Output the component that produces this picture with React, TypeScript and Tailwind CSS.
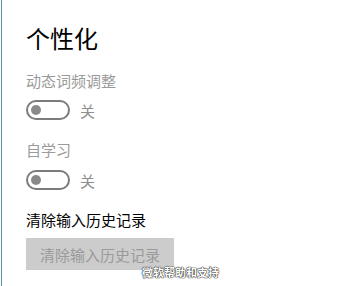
const font = { fontFamily: '"Noto Sans CJK SC", "Noto Sans", sans-serif' };

const Toggle = () => (
  <div className="flex items-center h-[20px]">
    <div className="w-[44px] h-[20px] rounded-full border-2 border-[#7c7c7c] flex items-center">
      <div className="w-[10px] h-[10px] rounded-full bg-[#8a8a8a] ml-[3px]" />
    </div>
    <span className="ml-[10px] text-[15px] leading-[15px] text-[#8e8e8e]">关</span>
  </div>
);

const App = () => {
  return (
    <div className="relative w-[356px] h-[286px] bg-white overflow-hidden pl-px" style={font}>
      <div className="h-full border-l border-[#5b99a0] pl-[24px] flex flex-col items-start">
        <h1 className="mt-[26px] text-[24px] leading-[24px] text-black font-normal">个性化</h1>
        <p className="mt-[23px] text-[15px] leading-[15px] text-[#9a9a9a]">动态词频调整</p>
        <div className="mt-[12px]">
          <Toggle />
        </div>
        <p className="mt-[22px] text-[15px] leading-[15px] text-[#9a9a9a]">自学习</p>
        <div className="mt-[13px]">
          <Toggle />
        </div>
        <p className="mt-[22px] text-[15px] leading-[15px] text-black">清除输入历史记录</p>
        <button className="mt-[11px] w-[148px] h-[32px] bg-[#cccccc] text-[15px] leading-[15px] text-[#9a9a9a] flex items-center justify-center">
          清除输入历史记录
        </button>
      </div>
      <span
        className="absolute left-[142px] top-[265px] text-[11px] leading-[14px] text-white font-bold"
        style={{ textShadow: '0 0 1px #222, 0 0 1px #222, 0 0 1px #222' }}
      >
        微软帮助和支持
      </span>
    </div>
  );
};

export default App;
